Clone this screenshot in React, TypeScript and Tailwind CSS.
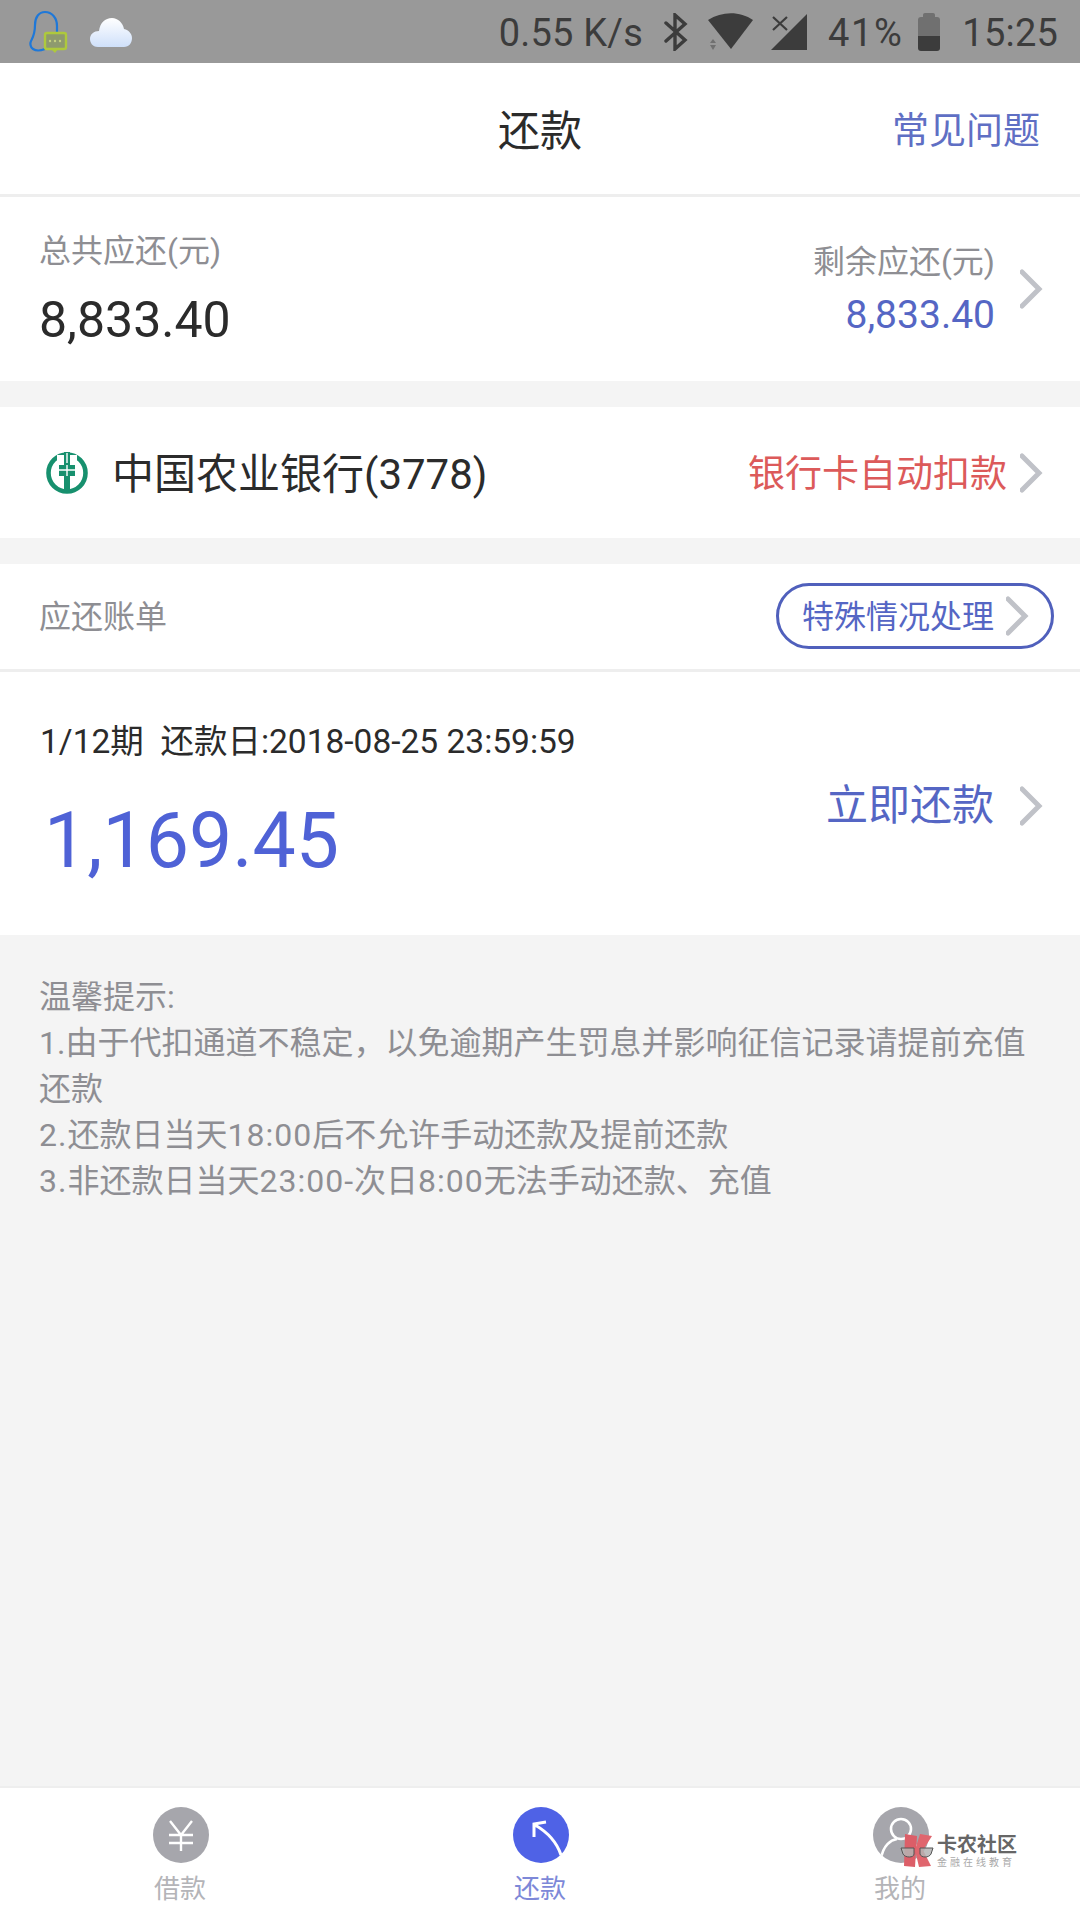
const fontStack = "font-['Roboto','Noto_Sans_CJK_SC',sans-serif]";

function Arrow({ className = '' }: { className?: string }) {
  return (
    <svg width="24" height="40" viewBox="0 0 24 40" className={className}>
      <path d="M2 3 L19 20 L2 37" fill="none" stroke="#c0c2c8" strokeWidth="5" strokeLinecap="round" />
    </svg>
  );
}

function StatusBar() {
  return (
    <div className="flex h-[63px] items-center justify-between bg-[#999999] pl-7 pr-[22px] font-['Roboto',sans-serif] text-[38px] text-[#3c3c3c]">
      <div className="flex items-center gap-[19px]">
        {/* notification: QQ outline + chat bubble */}
        <svg width="42" height="44" viewBox="0 0 42 44">
          <path d="M17 39 C12 41 8 41 5 39 C2 37 2 33 3 31 C5 27 7 24 7 15 C7 7 11 2 17 2 C24 2 29 8 29 16 L29 22" fill="none" stroke="#1f78d8" strokeWidth="2.2" />
          <rect x="17" y="23" width="21" height="16" rx="2" fill="#8e9a6e" stroke="#aec93c" strokeWidth="2.4" />
          <path d="M23 39 L27 43 L30 39" fill="#aec93c" />
          <circle cx="22" cy="31" r="1.2" fill="#c5cf80" />
          <circle cx="27" cy="31" r="1.2" fill="#c5cf80" />
          <circle cx="32" cy="31" r="1.2" fill="#c5cf80" />
        </svg>
        <svg width="44" height="32" viewBox="0 0 44 32">
          <defs>
            <linearGradient id="cloud" x1="0" y1="0" x2="0" y2="1">
              <stop offset="0" stopColor="#ffffff" />
              <stop offset="1" stopColor="#cfe0fa" />
            </linearGradient>
          </defs>
          <path d="M9 31 C3 31 1 26 1 23 C1 18 5 15 10 15 C11 7 16 2 23 2 C29 2 34 7 35 13 C40 14 43 18 43 22 C43 27 40 31 35 31 Z" fill="url(#cloud)" />
        </svg>
      </div>
      <div className="flex items-center">
        <span className="mr-[21px] pt-[4px] tracking-[0.2px]">0.55 K/s</span>
        <svg width="24" height="38" viewBox="0 0 24 38" className="mr-[20px]">
          <path d="M2 10 L21 27 L11 36 L11 2 L21 11 L2 28" fill="none" stroke="#3c3c3c" strokeWidth="3.4" strokeLinecap="round" />
        </svg>
        <svg width="46" height="38" viewBox="0 0 46 38" className="mr-[16px]">
          <path d="M0 7 C14 -2 32 -2 45 7 L23 36 Z" fill="#3c3c3c" />
          <path d="M2 30 L5 26 L8 30 Z M2 32 L8 32 L5 37 Z" fill="#707070" />
        </svg>
        <svg width="38" height="38" viewBox="0 0 38 38" className="mr-[20px]">
          <path d="M37 1 L37 37 L1 37 Z" fill="#3c3c3c" />
          <path d="M3 4 L17 17 M17 4 L3 17" stroke="#3c3c3c" strokeWidth="2.2" />
        </svg>
        <span className="mr-[15px] pt-[4px] tracking-[1.6px]">41%</span>
        <div className="mr-[22px] flex flex-col items-center">
          <div className="h-[4px] w-[12px] rounded-t-[2px] bg-[#707070]" />
          <div className="flex h-[34px] w-[22px] flex-col overflow-hidden rounded-[3px]">
            <div className="h-[19px] bg-[#707070]" />
            <div className="flex-1 bg-[#3c3c3c]" />
          </div>
        </div>
        <span className="pt-[4px] tracking-[0.2px]">15:25</span>
      </div>
    </div>
  );
}

function BankLogo() {
  return (
    <svg width="42" height="42" viewBox="0 0 42 42">
      <circle cx="21" cy="21" r="18.5" fill="none" stroke="#17906e" strokeWidth="4.6" />
      <path d="M11 3 V18 C11 25 15 29 21 29 C27 29 31 25 31 18 V3 Z" fill="#fff" />
      <path d="M13 13 H18 V0 H24 V13 H29 V24 H24 V41 H18 V24 H13 Z" fill="#17906e" />
      <path d="M13 18 H29 M21 13 V24 M21 1 V11" stroke="#fff" strokeWidth="1.4" />
    </svg>
  );
}

function Summary() {
  return (
    <div className="flex h-[184px] items-center justify-between bg-white pl-[39px] pr-9">
      <div>
        <div className="text-[32px] leading-[44px] text-[#8e8e93]">总共应还(元)</div>
        <div className="mt-[17px] text-[50px] leading-[60px] text-[#2b2b2b]">8,833.40</div>
      </div>
      <div className="flex items-center gap-[25px]">
        <div className="text-right">
          <div className="text-[32px] leading-[44px] text-[#8e8e93]">剩余应还(元)</div>
          <div className="mt-[7px] text-[39px] leading-[48px] text-[#5566c4]">8,833.40</div>
        </div>
        <Arrow />
      </div>
    </div>
  );
}

function BankRow() {
  return (
    <div className="mt-[26px] flex h-[131px] items-center justify-between bg-white pl-[46px] pr-9">
      <div className="flex items-center gap-[24px]">
        <BankLogo />
        <span className="pt-[4px] text-[42px] text-[#2b2b2b]">中国农业银行(3778)</span>
      </div>
      <div className="flex items-center gap-[13px]">
        <span className="pt-[4px] text-[37px] text-[#dc5a5a]">银行卡自动扣款</span>
        <Arrow />
      </div>
    </div>
  );
}

function BillHeader() {
  return (
    <div className="mt-[26px] flex h-[108px] items-center justify-between border-b-[3px] border-[#eeeeee] bg-white pl-[39px] pr-[26px]">
      <span className="text-[32px] text-[#8e8e93]">应还账单</span>
      <div className="mb-[2px] flex h-[66px] w-[278px] items-center gap-[12px] rounded-full border-[3px] border-[#5060bc] pl-[23px]">
        <span className="pt-[2px] text-[32px] text-[#5566c4]">特殊情况处理</span>
        <Arrow />
      </div>
    </div>
  );
}

function BillRow() {
  return (
    <div className="flex h-[263px] items-center justify-between bg-white pl-[39px] pr-9">
      <div>
        <div className="pl-[1px] text-[33.5px] leading-[44px] text-[#2b2b2b]">1/12期&nbsp;&nbsp;还款日:2018-08-25 23:59:59</div>
        <div className="mb-[-2px] mt-[29px] pl-[5px] text-[77px] leading-[96px] text-[#4f62d6]">1,169.45</div>
      </div>
      <div className="mt-[4px] flex items-center gap-[26px]">
        <span className="text-[42px] text-[#5566c4]">立即还款</span>
        <Arrow />
      </div>
    </div>
  );
}

function Tips() {
  return (
    <div className="flex-1 pl-[39px] pr-10 pt-[39px] text-[32px] leading-[46px] text-[#8e8e93]">
      <div>温馨提示:</div>
      <div>1.由于代扣通道不稳定，以免逾期产生罚息并影响征信记录请提前充值还款</div>
      <div>
        <span className="tracking-[1px]">2.</span>还款日当天<span className="tracking-[1px]">18:00</span>后不允许手动还款及提前还款
      </div>
      <div>
        <span className="tracking-[1px]">3.</span>非还款日当天<span className="tracking-[1px]">23:00-</span>次日<span className="tracking-[1px]">8:00</span>无法手动还款、充值
      </div>
    </div>
  );
}

function TabBar() {
  return (
    <div className="grid h-[134px] grid-cols-3 border-t-[2px] border-[#eeeeee] bg-white pt-[19px]">
      <div className="flex flex-col items-center">
        <svg width="56" height="56" viewBox="0 0 56 56" className="ml-[2px]">
          <circle cx="28" cy="28" r="28" fill="#a6a6ac" />
          <path d="M17 14 L28 28 L39 14 M16 28 H40 M16 36 H40 M28 28 V44" fill="none" stroke="#fff" strokeWidth="2.4" />
        </svg>
        <span className="mt-[8px] text-[26px] leading-[36px] text-[#b4b4b8]">借款</span>
      </div>
      <div className="flex flex-col items-center">
        <svg width="56" height="56" viewBox="0 0 56 56" className="ml-[2px]">
          <circle cx="28" cy="28" r="28" fill="#4f62e6" />
          <path d="M48 48 C44 36 36 26 22 18 M21 30 L21 17 L33 15" fill="none" stroke="#fff" strokeWidth="3" />
        </svg>
        <span className="mt-[8px] text-[26px] leading-[36px] text-[#7d88d8]">还款</span>
      </div>
      <div className="relative flex flex-col items-center">
        <svg width="56" height="56" viewBox="0 0 56 56" className="ml-[2px]">
          <clipPath id="avatar">
            <circle cx="28" cy="28" r="28" />
          </clipPath>
          <circle cx="28" cy="28" r="28" fill="#a6a6ac" />
          <g clipPath="url(#avatar)" fill="none" stroke="#fff" strokeWidth="2.6">
            <circle cx="28" cy="22" r="10" />
            <path d="M8 52 C10 38 18 33 24 32 M48 52 C46 38 38 33 32 32" />
          </g>
        </svg>
        <span className="mt-[8px] text-[26px] leading-[36px] text-[#b4b4b8]">我的</span>
        <Watermark />
      </div>
    </div>
  );
}

function Watermark() {
  return (
    <div className="absolute left-[180px] top-[26px] flex items-center gap-[3px]">
      <svg width="34" height="36" viewBox="0 0 34 36">
        <path d="M5 1 L17 3 L15 34 L4 33 Z" fill="#dc5e68" />
        <path d="M20 1 L32 3 L23 17 L31 33 L19 34 L15 17 Z" fill="#e0666e" />
        <path d="M1 15 H14 V21 C14 25 5 25 3 21 Z M20 15 H33 L31 21 C29 25 21 25 20 21 Z" fill="#b4b4b4" fillOpacity="0.85" stroke="#555" strokeWidth="1" />
      </svg>
      <div className="flex flex-col items-start">
        <span className="text-[20px] font-bold leading-[23px] text-[#666666]">卡农社区</span>
        <span className="text-[10px] leading-[12px] tracking-[3px] text-[#aaaaaa]">金融在线教育</span>
      </div>
    </div>
  );
}

export default function App() {
  return (
    <div className={`flex h-[1920px] w-[1080px] flex-col overflow-hidden bg-[#f4f4f4] ${fontStack}`}>
      <StatusBar />
      {/* Title bar */}
      <div className="relative flex h-[134px] items-center justify-center border-b-[3px] border-[#eeeeee] bg-white pt-[6px]">
        <span className="text-[42px] text-[#2b2b2b]">还款</span>
        <span className="absolute right-10 text-[37px] text-[#5f6fc4]">常见问题</span>
      </div>
      <Summary />
      <BankRow />
      <BillHeader />
      <BillRow />
      <Tips />
      <TabBar />
    </div>
  );
}
